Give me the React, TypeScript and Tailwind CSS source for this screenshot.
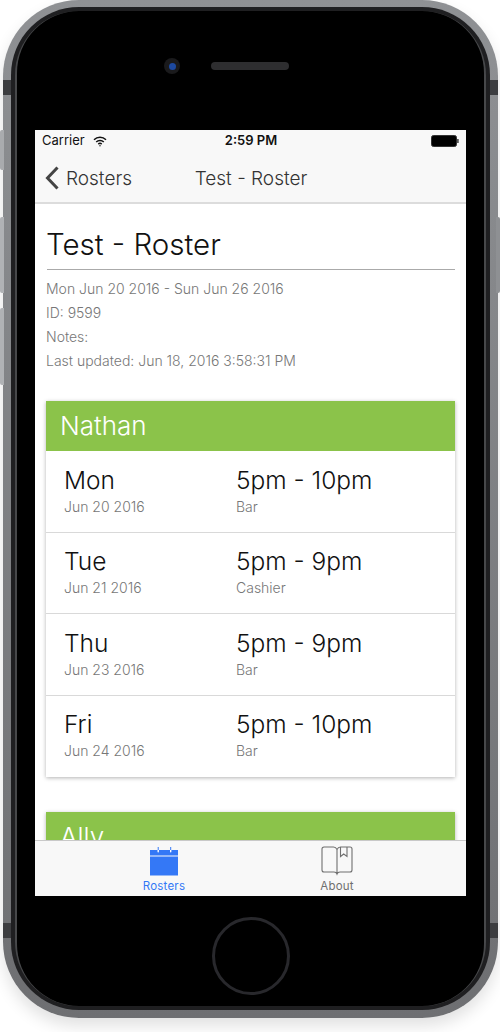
import React from "react";

const font = "font-['Inter','Liberation_Sans',sans-serif]";

const shifts = [
  { day: "Mon", date: "Jun 20 2016", time: "5pm - 10pm", place: "Bar" },
  { day: "Tue", date: "Jun 21 2016", time: "5pm - 9pm", place: "Cashier" },
  { day: "Thu", date: "Jun 23 2016", time: "5pm - 9pm", place: "Bar" },
  { day: "Fri", date: "Jun 24 2016", time: "5pm - 10pm", place: "Bar" },
];

function Wifi() {
  return (
    <svg width="14" height="11" viewBox="0 0 14 11" fill="none" stroke="#111" strokeWidth="1.5">
      <path d="M1 3.8a8.6 8.6 0 0 1 12 0" />
      <path d="M3.2 6a5.4 5.4 0 0 1 7.6 0" />
      <path d="M5.3 8.1a2.5 2.5 0 0 1 3.4 0" />
      <circle cx="7" cy="9.7" r="0.7" fill="#111" stroke="none" />
    </svg>
  );
}

function Battery() {
  return (
    <svg width="28" height="12" viewBox="0 0 28 12">
      <rect x="0.5" y="0.5" width="25" height="11" rx="2" fill="#000" stroke="#333" />
      <rect x="26.2" y="4" width="1.4" height="4" fill="#333" />
    </svg>
  );
}

function CalendarIcon() {
  return (
    <svg width="30" height="29" viewBox="0 0 30 29" fill="#3478f6">
      <rect x="1" y="3" width="28" height="5.5" />
      <rect x="1" y="9.5" width="28" height="19" />
      <rect x="8.5" y="0.5" width="1.4" height="5" rx="0.7" fill="#fff" />
      <rect x="8.7" y="0" width="1" height="3" fill="#3478f6" />
      <rect x="21" y="0.5" width="1.4" height="5" rx="0.7" fill="#fff" />
      <rect x="21.2" y="0" width="1" height="3" fill="#3478f6" />
    </svg>
  );
}

function BookIcon() {
  return (
    <svg width="32" height="30" viewBox="0 0 32 30" fill="none" stroke="#6f6f6f" strokeWidth="1.1">
      <path d="M16 3V27.5M16 3.5C15 1.5 14 1 12.5 1H3A2 2 0 0 0 1 3V24A2 2 0 0 0 3 26H13C15 26 15.5 26.5 16 28C16.5 26.5 17 26 19 26H29A2 2 0 0 0 31 24V3A2 2 0 0 0 29 1H19.5C18 1 17 1.5 16 3.5" />
      <path d="M19.5 1V10.5L22.7 8L26 10.5V1" />
    </svg>
  );
}

function ShiftRow({ shift }: { shift: (typeof shifts)[number] }) {
  return (
    <div className="flex h-[81.5px] border-b border-[#d9d9d9] last:border-b-0 pl-[18px] pt-[13.75px]">
      <div className="w-[172px]">
        <div className="text-[24.5px] leading-[30px] font-light text-[#111]">{shift.day}</div>
        <div className="text-[14px] leading-[20px] mt-[2px] font-light text-[#777]">{shift.date}</div>
      </div>
      <div>
        <div className="text-[24.5px] leading-[30px] font-light text-[#111]">{shift.time}</div>
        <div className="text-[14px] leading-[20px] mt-[2px] font-light text-[#777]">{shift.place}</div>
      </div>
    </div>
  );
}

export default function App() {
  return (
    <div className={`${font} relative w-[500px] h-[1032px] bg-white overflow-hidden`}>
      {/* side buttons */}
      <div className="absolute left-0 top-[130px] w-[4px] h-[40px] bg-[#a9abae] rounded-l-[2px]" />
      <div className="absolute left-0 top-[217px] w-[4px] h-[76px] bg-[#b0b2b5] rounded-l-[2px]" />
      <div className="absolute left-0 top-[308px] w-[4px] h-[77px] bg-[#b0b2b5] rounded-l-[2px]" />
      <div className="absolute right-0 top-[217px] w-[4px] h-[76px] bg-[#8e9093] rounded-r-[2px]" />

      <div className="ml-[3px] w-[495px] h-[1018px] rounded-[76px] bg-linear-to-b from-[#8f9194] to-[#6e6f72] pt-[7px] px-[8px] pb-[8px] shadow-[0_8px_16px_rgba(0,0,0,0.12)]">
        <div className="h-full rounded-[68px] bg-[#1f1f21] p-[4px]">
          <div className="h-full rounded-[64px] bg-[#47484a] px-[2px]">
            <div className="h-full rounded-[62px] bg-[#000] flex flex-col items-center">
              {/* earpiece and camera */}
              <div className="h-[119px] w-full flex items-start justify-center">
                <div className="flex items-center mt-[47px] ml-[-48px] gap-[31px]">
                  <div className="w-[16px] h-[16px] rounded-full bg-[#1a1a1c] flex items-center justify-center">
                    <div className="w-[7px] h-[7px] rounded-full bg-[#1d49a0]" />
                  </div>
                  <div className="w-[78px] h-[8px] rounded-full bg-[#2e2e30]" />
                </div>
              </div>

              {/* app screen */}
              <div className="w-[431px] h-[766px] bg-white flex flex-col">
                <div className="bg-[#f8f8f8] h-[74px] shrink-0 border-b-2 border-[#dcdcdc]">
                  <div className="relative h-[22px] flex items-center pl-[7px] text-[13px] text-[#111]">
                    <span>Carrier</span>
                    <span className="ml-[8px] flex"><Wifi /></span>
                    <span className="absolute left-0 right-0 text-center font-semibold ml-[1px]">2:59 PM</span>
                    <span className="absolute right-[7px] flex"><Battery /></span>
                  </div>
                  <div className="relative flex items-center h-[50px] pl-[10px] pt-[4px] text-[19px] font-light text-[#333]">
                    <svg className="-mt-[2px]" width="14" height="24" viewBox="0 0 14 24" fill="none" stroke="#444" strokeWidth="3">
                      <path d="M12.5 1.5L2.5 12L12.5 22.5" />
                    </svg>
                    <span className="ml-[7px]">Rosters</span>
                    <span className="absolute left-0 right-0 text-center ml-[1px]">Test - Roster</span>
                  </div>
                </div>

                <div className="flex-1 overflow-hidden px-[11px] min-h-0">
                  <h1 className="text-[29.5px] leading-[40px] font-light text-[#111] mt-[20px] pb-[5px] border-b border-[#aaa] w-[408px] ml-[1px] -indent-px">
                    Test - Roster
                  </h1>
                  <div className="mt-[7px] text-[14px] leading-[24px] font-light text-[#777]">
                    <div>Mon Jun 20 2016 - Sun Jun 26 2016</div>
                    <div>ID: 9599</div>
                    <div>Notes:</div>
                    <div>Last updated: Jun 18, 2016 3:58:31 PM</div>
                  </div>

                  <div className="mt-[28px] w-[409px] bg-white shadow-[0_1px_4px_rgba(0,0,0,0.3)]">
                    <div className="h-[50px] bg-[#8bc34a] pl-[14px] pb-[1px] flex items-center text-[26px] font-light text-white">
                      Nathan
                    </div>
                    {shifts.map((shift) => (
                      <ShiftRow key={shift.day} shift={shift} />
                    ))}
                  </div>

                  <div className="mt-[35px] w-[409px] bg-white shadow-[0_1px_4px_rgba(0,0,0,0.3)]">
                    <div className="h-[50px] bg-[#8bc34a] pl-[14px] pb-[1px] flex items-center text-[26px] font-light text-white">
                      Ally
                    </div>
                  </div>
                </div>

                <div className="h-[56px] shrink-0 bg-[#f8f8f8] border-t border-[#c9c9c9] flex justify-center">
                  <div className="w-[173px] flex flex-col items-center pt-[6px]">
                    <CalendarIcon />
                    <span className="text-[11.5px] leading-[14px] mt-[3px] tracking-[0.2px] text-[#3478f6]">Rosters</span>
                  </div>
                  <div className="w-[173px] flex flex-col items-center pt-[5px]">
                    <BookIcon />
                    <span className="text-[11.5px] leading-[14px] mt-[3px] tracking-[0.2px] text-[#6f6f6f]">About</span>
                  </div>
                </div>
              </div>

              {/* home button */}
              <div className="mt-[21px] w-[78px] h-[78px] rounded-full border-[3px] border-[#28282c]" />
            </div>
          </div>
        </div>
      </div>

      {/* antenna bands */}
      <div className="absolute left-[3px] top-[80px] w-[8px] h-[15px] bg-[#3c3d40]" />
      <div className="absolute right-[2px] top-[80px] w-[8px] h-[15px] bg-[#3c3d40]" />
      <div className="absolute left-[3px] top-[923px] w-[8px] h-[15px] bg-[#3c3d40]" />
      <div className="absolute right-[2px] top-[923px] w-[8px] h-[15px] bg-[#3c3d40]" />
    </div>
  );
}
